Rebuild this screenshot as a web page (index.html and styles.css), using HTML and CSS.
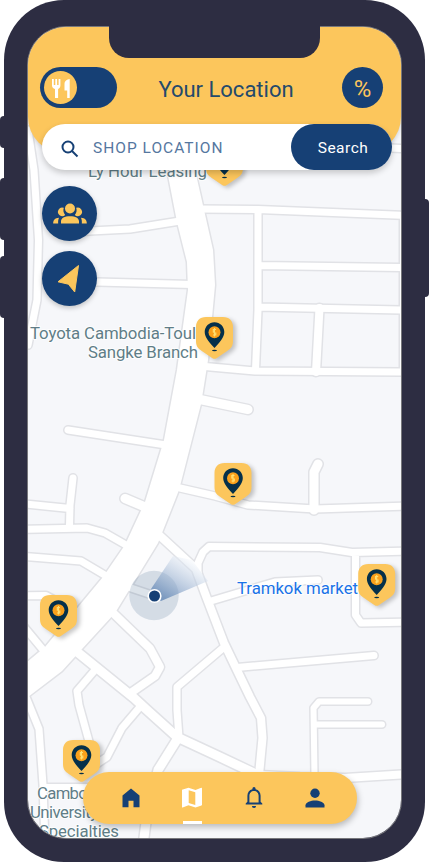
FILE: index.html
```html
<!DOCTYPE html>
<html lang="en">
<head>
<meta charset="utf-8">
<title>Your Location</title>
<link rel="stylesheet" href="styles.css">
</head>
<body>
<div class="phone">
  <span class="key key-mute"></span>
  <span class="key key-up"></span>
  <span class="key key-down"></span>
  <span class="key key-power"></span>
  <main class="screen">
    <svg class="map" viewBox="28 27 374 811" aria-label="Map">
      <defs>
        <g id="roads">
          <path class="area" d="M158 120L167 170L177 222L187 262L188 290L177 370L164 440L145 502L125 545L103 577L45 647L20 668V703L62 671L82 649L115 613L158 543L179 490L201 404L208 360L215 285L213 250L204 210L195 170L185 120Z"/>
          <path d="M28 130L34 170L38.5 240L37 300L28 345"/>
          <path d="M60 233L90 231L130 229L180 221M60 281L97 282L192 284.500"/>
          <path d="M200 209L258 209.500L410 215.500M370 147L410 149M258 210V310L255.500 370M258 265.500L403 267.500M258 307L403 310M205 366.500L255 371L410 372M403.500 215V372"/>
          <path class="w8" d="M319.500 308L316 372"/>
          <path class="w9" d="M200 399.500L248 409.500M125 498.500L145 507M314 510V472L318 464"/>
          <path d="M68 430L166 445M73 478L70 505L69.500 526M20 503.500L70 508.500M20 529.500L87 528L105 533L126 545"/>
          <path d="M180 488L215 496L248 505L315 509L410 506"/>
          <path d="M198 575V563L203 552L209 546.500L320 547.500L352 552.500L410 551M355.500 553V615L361 623L410 622"/>
          <path class="w8" d="M158 534L196 569L206 596L224 643L236 668L250 697L261 718L262.500 738L259 775"/>
          <path d="M211 601L275 582L318 580M237 667.500L374 655.500M223 648L177 687V710L179 738"/>
          <path class="w8" d="M110 610L150 648.500L160 667L155 676L132 692"/>
          <path class="w9" d="M76 651L97 668L134 698L147 710L177 737L220 757L258 775"/>
          <path d="M95 670L77 691L79 705L90 745M139 708L122 728L107 757L95 765"/>
          <path class="w9" d="M178 738L158 770L147 815L143 845"/>
          <path d="M26 697L39 729L43 785L45 845M43 787.500H110M20 622L44 651M20 556L81 561L108 577M20 596L46 595.500L56 601M131 588L152 595"/>
          <path class="w6" d="M314.500 775L313.500 708L319 701.500H368M315 724.500H382"/>
          <path class="w8" d="M259 775L300 777L345 778L410 774"/>
        </g>
        <g id="marker">
          <path class="marker-body" d="M-8.500 0H8.500C15 0 18.500 4 18.500 10V24C18.500 29 16.500 31.500 13 33.700L2 41.200Q0 42.500-2 41.200L-13 33.700C-16.500 31.500-18.500 29-18.500 24V10C-18.500 4-15 0-8.500 0Z"/>
          <path class="marker-pin" d="M-9.800 15C-9.800 9.500-5.500 5.200 0 5.200S9.800 9.500 9.800 15C9.800 20.500 5 25.500 0 31C-5 25.500-9.800 20.500-9.800 15Z"/>
          <ellipse class="marker-pin" cx="0" cy="33.500" rx="2.500" ry=".8"/>
          <circle class="coin" cy="15.300" r="6"/>
          <path class="coin-mark" d="M1.500 12.500H-1.200V15L1.300 15.800V18H-1.500M0 11V19.600"/>
        </g>
        <linearGradient id="beam" gradientUnits="userSpaceOnUse" x1="160" y1="596" x2="184" y2="557">
          <stop class="beam-near" offset="0"/>
          <stop class="beam-far" offset="1"/>
        </linearGradient>
      </defs>
      <rect class="land" x="28" y="27" width="374" height="811"/>
      <use class="casing" href="#roads"/>
      <use class="surface" href="#roads"/>
      <g class="place">
        <text x="88" y="176.500" textLength="119">Ly Hour Leasing</text>
        <text x="30" y="339" textLength="166">Toyota Cambodia-Toul</text>
        <text x="88" y="358" textLength="110">Sangke Branch</text>
        <text x="37" y="799" textLength="80">Cambodian</text>
        <text x="30" y="818" textLength="86">University of</text>
        <text x="39" y="837" textLength="80">Specialties</text>
        <text class="poi" x="237" y="594" textLength="121">Tramkok market</text>
      </g>
      <circle class="accuracy" cx="154" cy="595.500" r="24.700"/>
      <path fill="url(#beam)" d="M154 596L151 589L173 556L192 560L208 581L161 601Z"/>
      <circle class="me" cx="154.500" cy="596" r="6.300"/>
      <use href="#marker" x="224.500" y="144"/>
      <use href="#marker" x="214.500" y="317"/>
      <use href="#marker" x="233" y="463"/>
      <use href="#marker" x="376.700" y="564"/>
      <use href="#marker" x="58.500" y="595"/>
      <use href="#marker" x="81.500" y="740"/>
    </svg>

    <header class="header">
      <button class="toggle" aria-label="Food">
        <span class="knob">
          <svg width="20" height="20" viewBox="0 0 20 20" fill="#fff"><path d="M1 1h1.800v6h1.500V1h1.800v6h1.500V1h1.800v6.500c0 1.900-1.100 3-2.300 3.400V20H4V10.900C2.300 10.400 1 9.400 1 7.500zM18.700 1v19h-2.500v-7.500h-2.700V6c0-2.700 2.400-4.700 5.200-5z"/></svg>
        </span>
      </button>
      <h1 class="title">Your Location</h1>
      <button class="percent">%</button>
    </header>

    <div class="search">
      <svg class="search-icon" width="18" height="18" viewBox="0 0 18 18" fill="none" stroke="#164075" stroke-width="2"><circle cx="7" cy="7" r="5.500"/><path d="M11 11l5.500 5.500"/></svg>
      <span class="placeholder">SHOP LOCATION</span>
      <button class="search-button">Search</button>
    </div>

    <div class="tools">
      <button class="tool" aria-label="Friends">
        <svg width="34" height="22" viewBox="0 0 34 22" fill="#fcc65c"><circle cx="17" cy="5.500" r="5"/><path d="M8 20.500v-2c0-3.500 3.500-5.200 9-5.200s9 1.700 9 5.200v2zM10.800 4.800a4.300 4.300 0 1 0 1.400 7.200A7.500 7.500 0 0 1 10.800 4.800zM23.200 4.800a4.300 4.300 0 1 1-1.400 7.200A7.500 7.500 0 0 0 23.200 4.800zM.2 20.500c0-3.500 1.600-5.500 5.800-5.800C5.200 16.500 5 18.500 5.200 20.500zM33.800 20.500c0-3.500-1.600-5.500-5.800-5.800.8 1.800 1 3.800.8 5.800z"/></svg>
      </button>
      <button class="tool" aria-label="Navigate">
        <svg width="26" height="30" viewBox="0 0 26 30" fill="#fcc65c" stroke="#fcc65c" stroke-width="1" stroke-linejoin="round"><path d="M21.500 1.500L1 17.800L11.400 20.200L17.700 28Z"/></svg>
      </button>
    </div>

    <nav class="nav">
      <a class="nav-item"><svg width="24" height="24" viewBox="0 0 24 24" fill="#164075"><path d="M3.500 21.300V9.500L12 2.500l8.500 7v11.800h-6v-6.500h-5v6.500z"/></svg></a>
      <a class="nav-item active"><svg width="24" height="24" viewBox="0 0 24 24" fill="#fff" fill-rule="evenodd"><path d="M2 3.800L8.500 1.700L15.500 4L21.200 1.800Q22 1.700 22 2.500V18.800Q22 19.200 21.500 19.400L15.500 21.500L8.500 19.200L2.700 21.400Q2 21.500 2 20.900ZM8.700 4.300V17.100L15.300 19V6.300Z"/></svg></a>
      <a class="nav-item"><svg width="24" height="24" viewBox="0 0 24 24" fill="#164075" fill-rule="evenodd"><path d="M3.700 18.500v-1l1.700-1.700V9.700c0-3.200 1.900-5.800 5-6.500V2.700a1.600 1.600 0 0 1 3.200 0v.5c3.100.7 5 3.300 5 6.500v6.100l1.700 1.700v1zM7.400 16.500h9.200V9.700c0-2.700-1.900-4.800-4.600-4.800S7.400 7 7.400 9.700zM9.900 19.900h4.200a2.100 2.100 0 0 1-4.200 0z"/></svg></a>
      <a class="nav-item"><svg width="24" height="24" viewBox="0 0 24 24" fill="#164075"><circle cx="12" cy="7.200" r="4.700"/><path d="M2.500 21.500v-2.300c0-3.200 5.500-4.800 9.500-4.800s9.500 1.600 9.500 4.800v2.300z"/></svg></a>
    </nav>
  </main>
  <div class="notch"></div>
</div>
</body>
</html>
```

FILE: styles.css
```css
:root {
  --navy: #164075;
  --amber: #fcc65c;
  --shell: #2d2d42;
}

* {
  box-sizing: border-box;
}

body {
  margin: 0;
  background: #fff;
  font-family: Roboto, Arial, sans-serif;
  overflow: hidden;
}

button {
  border: 0;
  padding: 0;
  font: inherit;
}

svg {
  display: block;
}

.phone {
  position: relative;
  width: 421px;
  height: 862px;
  margin-left: 4px;
  padding: 26px 23px 23px;
  border-radius: 60px;
  background: var(--shell);
}

.key {
  position: absolute;
  width: 8px;
  left: -4px;
  border-radius: 4px;
  background: var(--shell);
}

.key-mute { top: 116px; height: 32px; }
.key-up { top: 178px; height: 62px; }
.key-down { top: 256px; height: 62px; }
.key-power { top: 199px; height: 98px; left: 417px; }

.notch {
  position: absolute;
  top: 20px;
  left: 105px;
  width: 211px;
  height: 38px;
  border-radius: 0 0 20px 20px;
  background: var(--shell);
}

.screen {
  position: relative;
  display: flex;
  flex-direction: column;
  width: 375px;
  height: 813px;
  border: 1px solid #77777b;
  border-radius: 39px;
  overflow: hidden;
}

.map {
  position: absolute;
  top: 0;
  left: 0;
  width: 374px;
  height: 811px;
}

.land { fill: #f6f7fa; }

#roads path {
  stroke-width: calc(var(--w, 7px) + var(--edge));
  stroke-linecap: round;
  stroke-linejoin: round;
  fill: none;
}

#roads .area { --w: 0px; fill: #fff; }
#roads .w6 { --w: 6px; }
#roads .w8 { --w: 8px; }
#roads .w9 { --w: 9px; }

.casing { --edge: 3px; stroke: #e1e2e6; }
.surface { --edge: 0px; stroke: #fff; }

.place {
  font: 16.8px Roboto, sans-serif;
  fill: #607d87;
  stroke: #fff;
  stroke-width: 2px;
  stroke-opacity: .8;
  paint-order: stroke;
}

.poi { fill: #1a73e8; }

.accuracy { fill: var(--navy); opacity: .15; }
.beam-near { stop-color: #5079ae; stop-opacity: .68; }
.beam-far { stop-color: #f2f6fb; stop-opacity: .5; }
.me { fill: var(--navy); stroke: #fff; stroke-width: 1.6px; }

.marker-body { fill: var(--amber); filter: drop-shadow(3px 2px 2px rgba(0, 0, 0, .22)); }
.marker-pin { fill: #05304a; }
.coin { fill: #f9a01b; }
.coin-mark { fill: none; stroke: #ffe071; stroke-width: 1.1px; }

.header {
  position: relative;
  display: flex;
  flex: none;
  align-items: flex-start;
  justify-content: space-between;
  height: 126px;
  padding: 40px 18px 0 12px;
  border-radius: 0 0 36px 36px;
  background: var(--amber);
  box-shadow: 0 2px 4px rgba(0, 0, 0, .15);
}

.toggle {
  width: 77px;
  height: 41px;
  padding: 4px;
  border-radius: 21px;
  background: var(--navy);
}

.knob {
  display: flex;
  align-items: center;
  justify-content: center;
  width: 33px;
  height: 33px;
  border-radius: 50%;
  background: var(--amber);
}

.title {
  margin: 9px 0 0 -7px;
  color: #244a6c;
  font-size: 22px;
  font-weight: 400;
  line-height: 28px;
}

.percent {
  display: flex;
  align-items: center;
  justify-content: center;
  width: 41px;
  height: 41px;
  padding-top: 2px;
  border-radius: 50%;
  background: var(--navy);
  color: var(--amber);
  font-size: 24px;
}

.search {
  position: relative;
  display: flex;
  flex: none;
  align-items: center;
  width: 350px;
  height: 46px;
  margin: -29px 0 0 14px;
  padding-left: 19px;
  border-radius: 23px;
  background: #fff;
  box-shadow: 0 3px 6px rgba(0, 0, 0, .2);
}

.search-icon {
  flex: none;
  margin-top: 4px;
}

.placeholder {
  margin: 2px 0 0 14px;
  color: #55779f;
  font-size: 15.5px;
  letter-spacing: 1px;
  white-space: nowrap;
}

.search-button {
  width: 101px;
  height: 46px;
  margin-left: auto;
  padding: 2px 0 0 3px;
  border-radius: 23px;
  background: var(--navy);
  color: #fff;
  font-size: 15.5px;
  letter-spacing: .5px;
}

.tools {
  position: relative;
  display: grid;
  gap: 10px;
  width: 55px;
  margin: 16px 0 0 14px;
}

.tool {
  display: flex;
  align-items: center;
  justify-content: center;
  width: 55px;
  height: 55px;
  border-radius: 50%;
  background: var(--navy);
  box-shadow: 0 2px 5px rgba(0, 0, 0, .22);
}

.nav {
  position: relative;
  display: flex;
  width: 274px;
  height: 52px;
  margin: auto 0 14px 55px;
  padding: 0 11px 0 17px;
  border-radius: 26px;
  background: var(--amber);
  box-shadow: 1px 3px 6px rgba(0, 0, 0, .25);
}

.nav-item {
  display: flex;
  flex: 1;
  align-items: center;
  justify-content: center;
}

.nav-item.active {
  background: linear-gradient(#fff, #fff) center bottom / 19px 3px no-repeat;
}
```
